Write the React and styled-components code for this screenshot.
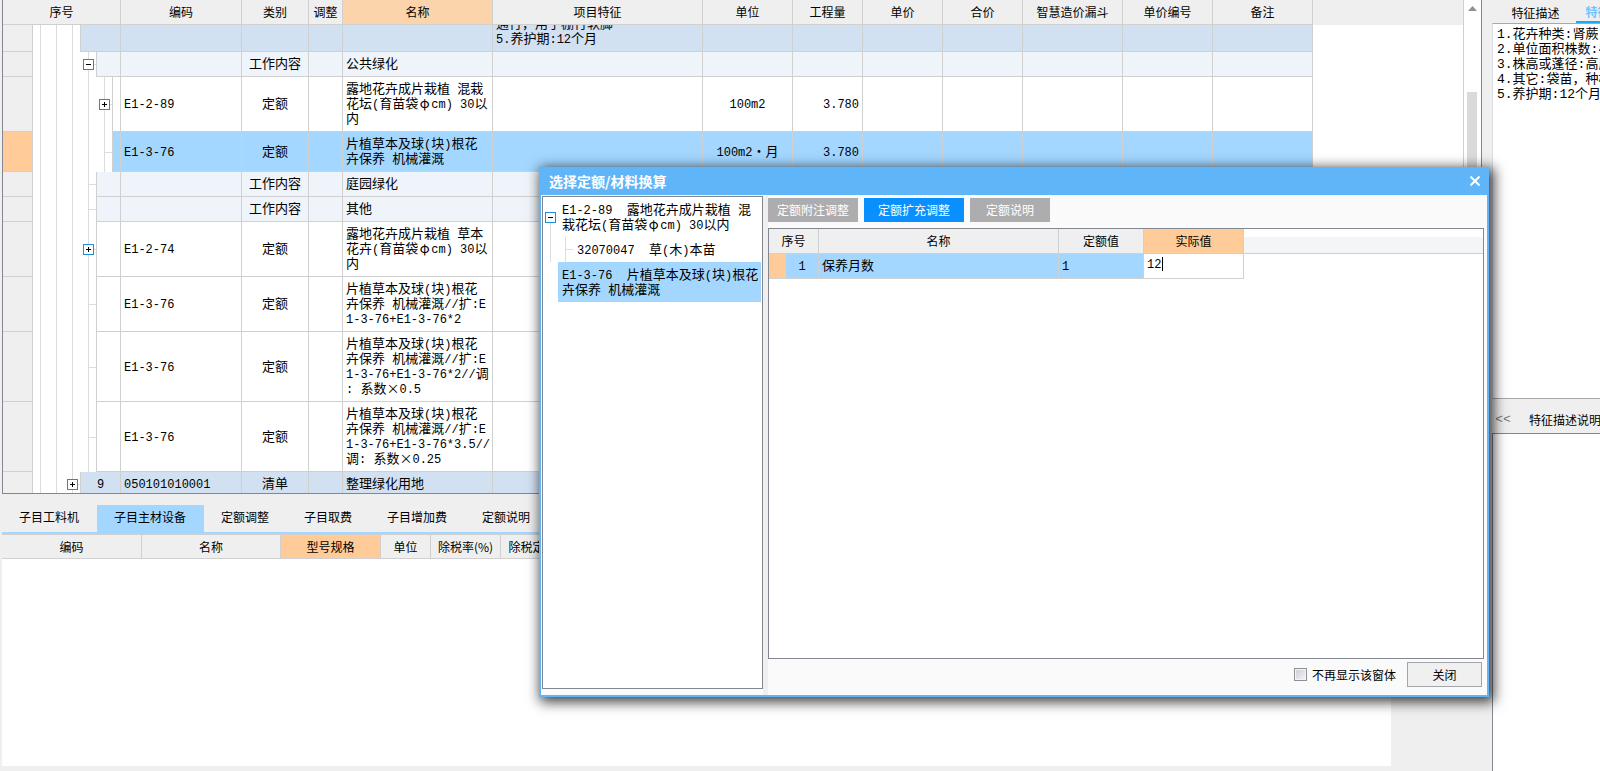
import React, { useState } from 'react';
import styled, { createGlobalStyle, css } from 'styled-components';

const col = {
  face: '#efefef',
  line: '#d0d0d0',
  guide: '#dcdcdc',
  frame: '#828790',
  select: '#a3d7ff',
  list: '#d2e1f2',
  work: '#eef4f9',
  orange: '#ffcb98',
  title: '#5fb5f7',
};

const columns = [
  { label: '编码', width: 121 },
  { label: '类别', width: 67 },
  { label: '调整', width: 34 },
  { label: '名称', width: 150, active: true },
  { label: '项目特征', width: 210 },
  { label: '单位', width: 90 },
  { label: '工程量', width: 70 },
  { label: '单价', width: 80 },
  { label: '合价', width: 80 },
  { label: '智慧造价漏斗', width: 100 },
  { label: '单价编号', width: 90 },
  { label: '备注', width: 100 },
];

const rows = [
  { id: 1, level: 2, tone: 'list', feature: '通行，用于棚行软脚\n5.养护期:12个月', cut: true },
  { id: 2, level: 3, tone: 'work', toggle: '-', kind: '工作内容', name: '公共绿化' },
  {
    id: 3,
    level: 4,
    toggle: '+',
    code: 'E1-2-89',
    kind: '定额',
    name: '露地花卉成片栽植 混栽\n花坛(育苗袋φcm) 30以\n内',
    unit: '100m2',
    amount: '3.780',
  },
  {
    id: 4,
    level: 4,
    tone: 'select',
    code: 'E1-3-76',
    kind: '定额',
    name: '片植草本及球(块)根花\n卉保养 机械灌溉',
    unit: '100m2·月',
    amount: '3.780',
  },
  { id: 5, level: 3, tone: 'work', kind: '工作内容', name: '庭园绿化' },
  { id: 6, level: 3, tone: 'work', kind: '工作内容', name: '其他' },
  {
    id: 7,
    level: 3,
    toggle: '+',
    code: 'E1-2-74',
    kind: '定额',
    name: '露地花卉成片栽植 草本\n花卉(育苗袋φcm) 30以\n内',
  },
  {
    id: 8,
    level: 3,
    code: 'E1-3-76',
    kind: '定额',
    name: '片植草本及球(块)根花\n卉保养 机械灌溉//扩:E\n1-3-76+E1-3-76*2',
  },
  {
    id: 9,
    level: 3,
    code: 'E1-3-76',
    kind: '定额',
    name: '片植草本及球(块)根花\n卉保养 机械灌溉//扩:E\n1-3-76+E1-3-76*2//调\n: 系数×0.5',
  },
  {
    id: 10,
    level: 3,
    code: 'E1-3-76',
    kind: '定额',
    name: '片植草本及球(块)根花\n卉保养 机械灌溉//扩:E\n1-3-76+E1-3-76*3.5//\n调: 系数×0.25',
  },
  {
    id: 11,
    level: 2,
    tone: 'list',
    toggle: '+',
    no: '9',
    code: '050101010001',
    kind: '清单',
    name: '整理绿化用地',
  },
];

const detailTabs = ['子目工料机', '子目主材设备', '定额调整', '子目取费', '子目增加费', '定额说明'];

const detailColumns = [
  { label: '编码', width: 140 },
  { label: '名称', width: 139 },
  { label: '型号规格', width: 100, active: true },
  { label: '单位', width: 50 },
  { label: '除税率(%)', width: 70 },
  { label: '除税定额价', width: 76 },
];

const dialogTabs = [
  { label: '定额附注调整', width: 90 },
  { label: '定额扩充调整', width: 100 },
  { label: '定额说明', width: 80 },
];

// latin runs are set in the half-width face, a few symbols take a full cell
const Mixed = ({ children }) =>
  (children || '').split('\n').map((line, n) => (
    <Line key={n}>
      {line.split(/([\x20-\x7e]+|[φ×·])/).map((part, i) => {
        if (i % 2 === 0) return part;
        return /[φ×·]/.test(part) ? <Wide key={i}>{part}</Wide> : <Latin key={i}>{part}</Latin>;
      })}
    </Line>
  ));

const Toggle = ({ open, onClick }) => (
  <ToggleButton type="button" onClick={onClick} aria-label={open ? '折叠' : '展开'}>
    <svg width="9" height="9" viewBox="0 0 9 9" shapeRendering="crispEdges">
      <path d={open ? 'M2 4h5v1h-5z' : 'M2 4h5v1h-5zM4 2h1v5h-1z'} fill="#000" />
    </svg>
  </ToggleButton>
);

const MainRow = ({ row }) => (
  <Row $tone={row.tone}>
    <RowHead scope="row" $active={row.tone === 'select'} />
    <TreeCell>
      <TreeLine>
        {Array.from({ length: row.level + 1 }, (_, i) => {
          const last = i === row.level;
          return (
            <Guide key={i} $last={last} $stub={last && !row.cut}>
              {last && row.toggle && <Toggle open={row.toggle === '-'} />}
            </Guide>
          );
        })}
        <TreeNumber>
          <Mixed>{row.no}</Mixed>
        </TreeNumber>
      </TreeLine>
    </TreeCell>
    <Cell><Mixed>{row.code}</Mixed></Cell>
    <Cell $align="center">{row.kind}</Cell>
    <Cell />
    <Cell><Mixed>{row.name}</Mixed></Cell>
    <Cell $cut={row.cut}>
      {row.cut ? (
        <CutText>
          <Mixed>{row.feature}</Mixed>
        </CutText>
      ) : (
        row.feature
      )}
    </Cell>
    <Cell $align="center"><Mixed>{row.unit}</Mixed></Cell>
    <Cell $align="right"><Mixed>{row.amount}</Mixed></Cell>
    <Cell />
    <Cell />
    <Cell />
    <Cell />
    <Cell />
    <EmptyCell />
  </Row>
);

const MainGrid = () => (
  <GridPane>
    <GridView>
      <Table>
        <colgroup>
          <col style={{ width: 30 }} />
          <col style={{ width: 88 }} />
          {columns.map((c) => (
            <col key={c.label} style={{ width: c.width }} />
          ))}
          <col />
        </colgroup>
        <thead>
          <tr>
            <Head colSpan={2}>序号</Head>
            {columns.map((c) => (
              <Head key={c.label} $soft={c.active}>{c.label}</Head>
            ))}
            <HeadRest />
          </tr>
        </thead>
        <tbody>
          {rows.map((row) => (
            <MainRow key={row.id} row={row} />
          ))}
        </tbody>
      </Table>
    </GridView>
    <ScrollBar>
      <svg width="9" height="5" viewBox="0 0 9 5">
        <path d="M0 5L4.500 0L9 5z" fill="#909090" />
      </svg>
      <Thumb />
    </ScrollBar>
  </GridPane>
);

const Details = () => {
  const [tab, setTab] = useState('子目主材设备');
  return (
    <DetailPane>
      <TabBar>
        {detailTabs.map((t) => (
          <Tab key={t} type="button" $active={t === tab} onClick={() => setTab(t)}>
            {t}
          </Tab>
        ))}
      </TabBar>
      <DetailBody>
        <Table>
          <colgroup>
            {detailColumns.map((c) => (
              <col key={c.label} style={{ width: c.width }} />
            ))}
            <col />
          </colgroup>
          <thead>
            <tr>
              {detailColumns.map((c) => (
                <Head key={c.label} $short $active={c.active}>{c.label}</Head>
              ))}
              <HeadRest />
            </tr>
          </thead>
        </Table>
      </DetailBody>
    </DetailPane>
  );
};

const featureText = `1.花卉种类:肾蕨
2.单位面积株数:49株/m2
3.株高或蓬径:高度25cm
4.其它:袋苗，种植土
5.养护期:12个月`;

const SidePanel = () => (
  <Side>
    <SideTabs>
      <SideTab type="button">特征描述</SideTab>
      <SideTab type="button" $active>特征值</SideTab>
    </SideTabs>
    <FeatureBox aria-label="特征描述" defaultValue={featureText} wrap="off" />
    <NoteHead>
      <Back type="button">&lt;&lt;</Back>
      <span>特征描述说明</span>
    </NoteHead>
    <NoteBox />
  </Side>
);

const Dialog = () => {
  const [tab, setTab] = useState('定额扩充调整');
  const [value, setValue] = useState('12');
  return (
    <Window role="dialog" aria-label="选择定额/材料换算">
      <TitleBar>
        <span>选择定额/材料换算</span>
        <CloseIcon type="button" aria-label="关闭窗口">
          <svg width="10" height="10" viewBox="0 0 10 10">
            <path d="M0.500 0.500L9.500 9.500M9.500 0.500L0.500 9.500" stroke="#fff" strokeWidth="2" />
          </svg>
        </CloseIcon>
      </TitleBar>
      <WindowBody>
        <Tree>
          <TreeItem>
            <TreeGuide $half>
              <Toggle open />
            </TreeGuide>
            <TreeText>
              <Mixed>{'E1-2-89  露地花卉成片栽植 混\n栽花坛(育苗袋φcm) 30以内'}</Mixed>
            </TreeText>
          </TreeItem>
          <TreeItem>
            <TreeGuide />
            <TreeGuide $stub />
            <TreeText>
              <Mixed>32070047  草(木)本苗</Mixed>
            </TreeText>
          </TreeItem>
          <TreeItem>
            <TreeGuide $blank />
            <TreeText $active>
              <Mixed>{'E1-3-76  片植草本及球(块)根花\n卉保养 机械灌溉'}</Mixed>
            </TreeText>
          </TreeItem>
        </Tree>
        <Content>
          <DialogTabs>
            {dialogTabs.map((t) => (
              <DialogTab
                key={t.label}
                type="button"
                $width={t.width}
                $active={t.label === tab}
                onClick={() => setTab(t.label)}
              >
                {t.label}
              </DialogTab>
            ))}
          </DialogTabs>
          <ValueBox>
            <Table>
              <colgroup>
                <col style={{ width: 17 }} />
                <col style={{ width: 33 }} />
                <col style={{ width: 240 }} />
                <col style={{ width: 85 }} />
                <col style={{ width: 100 }} />
                <col />
              </colgroup>
              <thead>
                <tr>
                  <Head colSpan={2}>序号</Head>
                  <Head>名称</Head>
                  <Head>定额值</Head>
                  <Head $active>实际值</Head>
                  <GradientRest />
                </tr>
              </thead>
              <tbody>
                <Row $tone="select">
                  <RowMark />
                  <Cell $align="center"><Mixed>1</Mixed></Cell>
                  <Cell>保养月数</Cell>
                  <Cell><Mixed>1</Mixed></Cell>
                  <InputCell>
                    <InputBox>
                      <ValueInput
                        aria-label="实际值"
                        value={value}
                        onChange={(e) => setValue(e.target.value)}
                      />
                      <Caret style={{ left: `calc(4px + ${value.length}ch)` }} />
                    </InputBox>
                  </InputCell>
                  <EmptyCell />
                </Row>
              </tbody>
            </Table>
          </ValueBox>
          <Footer>
            <CheckLabel>
              <CheckBox type="checkbox" />
              不再显示该窗体
            </CheckLabel>
            <PushButton type="button">关闭</PushButton>
          </Footer>
        </Content>
      </WindowBody>
    </Window>
  );
};

const App = () => (
  <>
    <GlobalStyle />
    <Page>
      <Main>
        <MainGrid />
        <Details />
      </Main>
      <SidePanel />
      <Dialog />
    </Page>
  </>
);

export default App;

const GlobalStyle = createGlobalStyle`
  * {
    box-sizing: border-box;
  }
  body {
    margin: 0;
    background: ${col.face};
    color: #000;
    font: 12px/16px 'Noto Sans CJK SC', sans-serif;
  }
  button, input, textarea {
    font: inherit;
    color: inherit;
    margin: 0;
    padding: 0;
    border: 0;
    border-radius: 0;
    outline: 0;
    background: none;
  }
`;

const gridText = css`
  font-family: 'Noto Sans CJK SC', sans-serif;
  font-size: 13px;
  line-height: 15px;
`;

const monoFont = css`
  font-family: 'Liberation Mono', 'Noto Sans CJK SC', monospace;
`;

const Line = styled.div`
  height: 15px;
`;

const Latin = styled.span`
  ${monoFont}
  font-size: 12px;
  line-height: 0;
`;

const Wide = styled.span`
  display: inline-block;
  width: 13px;
  text-align: center;
`;

const Page = styled.div`
  position: relative;
  display: flex;
  height: 100vh;
  overflow: hidden;
`;

const Main = styled.main`
  flex: 1;
  min-width: 0;
  display: flex;
  flex-direction: column;
  padding: 0 10px 5px 2px;
`;

const GridPane = styled.section`
  flex: 493 1 0;
  min-height: 0;
  display: flex;
  background: #fff;
  border: solid ${col.frame};
  border-width: 0 1px 1px;
`;

const GridView = styled.div`
  flex: 1;
  min-width: 0;
  overflow: hidden;
`;

const Table = styled.table`
  width: 100%;
  table-layout: fixed;
  border-collapse: separate;
  border-spacing: 0;
`;

const Head = styled.th`
  height: ${({ $short }) => ($short ? 24 : 25)}px;
  padding: 0;
  font-weight: normal;
  white-space: nowrap;
  border: solid ${col.line};
  border-width: 0 1px 1px 0;
  background: ${({ $active, $soft }) => ($active ? col.orange : $soft ? '#fbd4ab' : col.face)};
`;

const HeadRest = styled.td`
  background: ${col.face};
`;

const GradientRest = styled.td`
  padding: 0;
  border-bottom: 1px solid ${col.line};
  background: linear-gradient(#fff 35%, #f4f5f6 35%);
`;

const Row = styled.tr`
  background: ${({ $tone }) => (($tone && col[$tone]) || '#fff')};
`;

const RowHead = styled.th`
  padding: 0;
  border: solid ${col.line};
  border-width: 0 1px 1px 0;
  background: ${({ $active }) => ($active ? col.orange : col.face)};
`;

const RowMark = styled.td`
  padding: 0;
  border-bottom: 1px solid ${col.line};
  background: ${col.orange};
`;

const TreeCell = styled.td`
  height: 1px;
  padding: 0;
`;

const TreeLine = styled.div`
  display: flex;
  height: 100%;
`;

const Guide = styled.div`
  flex: 0 0 16px;
  display: flex;
  align-items: center;
  padding-left: 2px;
  border-right: ${({ $last }) => ($last ? `1px solid ${col.line}` : '0')};
  background:
    linear-gradient(${col.guide}, ${col.guide}) 7px 0 / 1px 100% no-repeat,
    linear-gradient(${col.guide}, ${col.guide}) 7px 50% / ${({ $stub }) => ($stub ? '8px' : '0')} 1px no-repeat,
    #fff;
`;

const ToggleButton = styled.button`
  display: flex;
  width: 11px;
  height: 11px;
  border: 1px solid #1d8fd6;
  background: #fff;
`;

const TreeNumber = styled.div`
  ${gridText}
  flex: 1;
  padding: 3px 0 6px;
  text-align: center;
  border: solid ${col.line};
  border-width: 0 1px 1px 0;
`;

const Cell = styled.td`
  ${gridText}
  padding: ${({ $cut }) => ($cut ? '0 3px 6px' : '3px 3px 6px')};
  height: 25px;
  white-space: pre;
  overflow: hidden;
  text-align: ${({ $align }) => $align || 'left'};
  border: solid ${col.line};
  border-width: 0 1px 1px 0;
`;

const CutText = styled.div`
  display: flex;
  flex-direction: column;
  justify-content: flex-end;
  height: 20px;
  overflow: hidden;

  & > div {
    flex: none;
  }
`;

const EmptyCell = styled.td`
  padding: 0;
  background: #fff;
`;

const ScrollBar = styled.div`
  flex: 0 0 18px;
  display: flex;
  flex-direction: column;
  padding: 6px 4px 0 3px;
  gap: 81px;
  border-left: 1px solid ${col.line};

  svg {
    align-self: center;
    flex: none;
  }
`;

const Thumb = styled.div`
  flex: 1;
  background: #dadada;
`;

const DetailPane = styled.section`
  flex: 261 1 0;
  min-height: 0;
  display: flex;
  flex-direction: column;
  padding: 11px 91px 0 0;
`;

const TabBar = styled.div`
  display: flex;
  height: 29px;
  border-bottom: 2px solid ${col.select};
`;

const Tab = styled.button`
  padding: 0 18px 3px 17px;
  background: ${({ $active }) => ($active ? col.select : 'none')};
`;

const DetailBody = styled.div`
  flex: 1;
  border-top: 1px solid ${col.line};
  background: #fff;
  overflow: hidden;
`;

const Side = styled.aside`
  flex: 0 0 108px;
  display: flex;
  flex-direction: column;
  overflow: hidden;
`;

const SideTabs = styled.div`
  display: flex;
  flex: 0 0 23px;
`;

const SideTab = styled.button`
  flex: none;
  padding: 3px 0 0 3px;
  width: 84px;
  white-space: nowrap;
  text-align: center;
  ${({ $active }) =>
    $active &&
    css`
      width: 52px;
      font-weight: bold;
      color: #6cc5ff;
      border-bottom: 2px solid #17a9fb;
    `}
`;

const FeatureBox = styled.textarea`
  ${gridText}
  ${monoFont}
  flex: 368 1 0;
  min-height: 0;
  width: 100%;
  padding: 3px 4px;
  resize: none;
  overflow: hidden;
  background: #fff;
  border: solid #a8a8ac;
  border-width: 1px 0 1px 1px;
  border-left-color: #dcdce4;
`;

const NoteHead = styled.div`
  flex: 0 0 34px;
  display: flex;
  align-items: center;
  gap: 17px;
  padding: 8px 0 0 2px;
  white-space: nowrap;
`;

const Back = styled.button`
  ${monoFont}
  flex: none;
  width: 18px;
  font-size: 13px;
  color: #777;
`;

const NoteBox = styled.div`
  flex: 337 1 0;
  background: #fff;
  border: solid ${col.frame};
  border-width: 1px 0 0 1px;
`;

const Window = styled.section`
  position: absolute;
  left: 539px;
  top: 167px;
  width: 950px;
  height: 530px;
  display: flex;
  flex-direction: column;
  border: 2px solid ${col.title};
  border-top: 0;
  background: #fafafa;
  box-shadow: 3px 3px 12px 2px rgba(0, 0, 0, 0.75);
`;

const TitleBar = styled.header`
  flex: 0 0 28px;
  display: flex;
  align-items: center;
  justify-content: space-between;
  padding: 0 7px 0 8px;
  background: ${col.title};
  color: #fff;
  font-size: 14px;
  font-weight: bold;
`;

const CloseIcon = styled.button`
  display: flex;
  cursor: pointer;
`;

const WindowBody = styled.div`
  flex: 1;
  min-height: 0;
  display: flex;
  padding: 1px 3px 0 1px;
`;

const Tree = styled.div`
  flex: 0 0 221px;
  margin-bottom: 6px;
  padding-right: 1px;
  border: 1px solid ${col.frame};
  background: #fff;
`;

const TreeItem = styled.div`
  display: flex;
`;

const TreeGuide = styled.div`
  flex: 0 0 15px;
  display: flex;
  align-items: center;
  padding-left: 2px;
  background:
    linear-gradient(${col.guide}, ${col.guide}) 7px 100% / 1px ${({ $half }) => ($half ? '50%' : '100%')} no-repeat,
    linear-gradient(${col.guide}, ${col.guide}) 7px 50% / ${({ $stub }) => ($stub ? '8px' : '0')} 1px no-repeat;
  ${({ $blank }) => $blank && 'background: none;'}
`;

const TreeText = styled.div`
  ${gridText}
  flex: 1;
  padding: 4px 0 6px 4px;
  white-space: pre;
  background: ${({ $active }) => ($active ? col.select : 'none')};
`;

const Content = styled.div`
  flex: 1;
  min-width: 0;
  display: flex;
  flex-direction: column;
  border-left: 5px solid ${col.face};
`;

const DialogTabs = styled.div`
  display: flex;
  gap: 6px;
  padding: 2px 0 6px;
`;

const DialogTab = styled.button`
  width: ${({ $width }) => $width}px;
  height: 24px;
  color: #fff;
  background: ${({ $active }) => ($active ? '#0a8fff' : '#adadaf')};
`;

const ValueBox = styled.div`
  flex: 1;
  border: 1px solid ${col.frame};
  background: #fff;
  overflow: hidden;
`;

const InputCell = styled.td`
  padding: 0;
  background: #fff;
  border: solid ${col.line};
  border-width: 0 1px 1px 0;
`;

const InputBox = styled.div`
  ${monoFont}
  position: relative;
  height: 24px;
  font-size: 12px;
  line-height: 15px;
`;

const ValueInput = styled.input`
  display: block;
  width: 100%;
  padding: 4px 3px 5px;
  caret-color: transparent;
`;

const Caret = styled.span`
  position: absolute;
  top: 3px;
  width: 1px;
  height: 14px;
  background: #000;
`;

const Footer = styled.footer`
  flex: 0 0 36px;
  display: flex;
  align-items: flex-start;
  justify-content: flex-end;
  gap: 11px;
  padding: 3px 2px 0 0;
`;

const CheckLabel = styled.label`
  display: flex;
  align-items: center;
  gap: 5px;
  height: 25px;
`;

const CheckBox = styled.input`
  appearance: none;
  width: 13px;
  height: 13px;
  border: 1px solid #8e8f8f;
  background: linear-gradient(135deg, #c8ccd4, #f6f6f6);
  box-shadow: inset 0 0 0 1px #f4f4f4;

  &:checked {
    background: #4a6fa5;
  }
`;

const PushButton = styled.button`
  width: 75px;
  height: 25px;
  border: 1px solid #a2a6aa;
  background: #f0f0f0;
`;
